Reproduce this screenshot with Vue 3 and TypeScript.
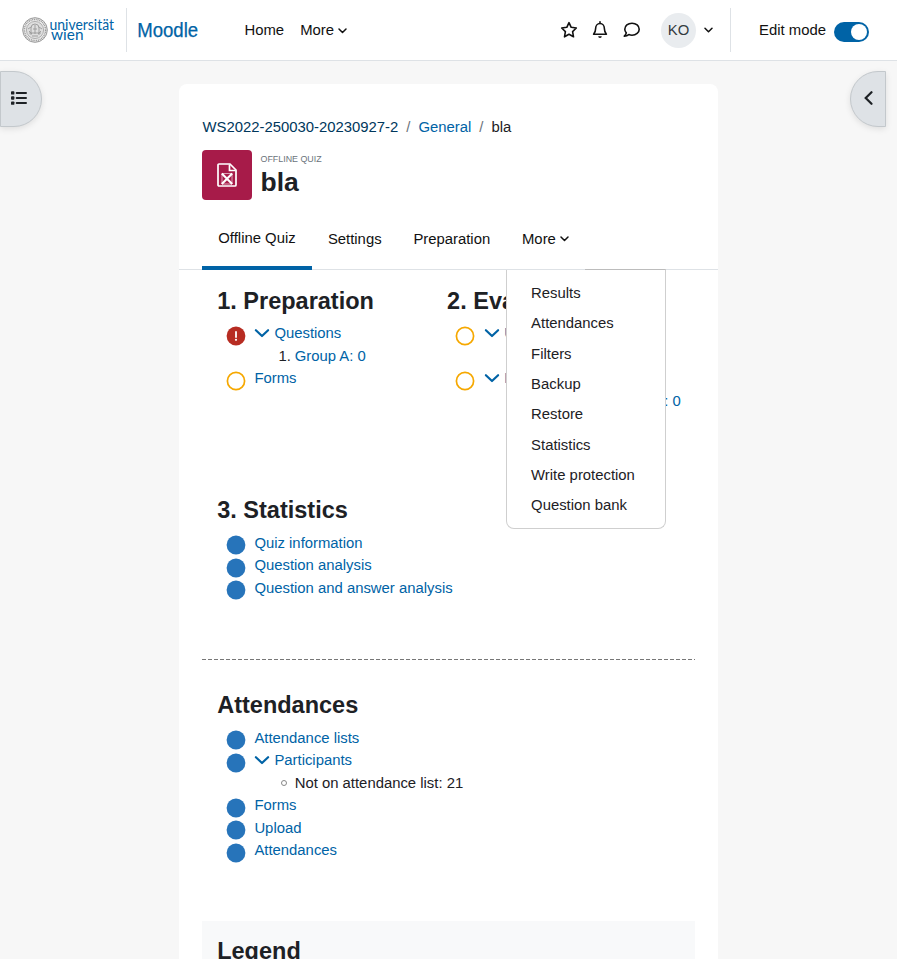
<script setup lang="ts">
interface Row {
  label: string
  status: 'error' | 'open' | 'done'
  expandable?: boolean
  children?: { marker: 'number' | 'circle'; text: string; link: boolean }[]
}
interface Section {
  title: string
  key: string
  rows: Row[]
}

const sections: Section[] = [
  {
    title: '1. Preparation',
    key: 'preparation',
    rows: [
      { label: 'Questions', status: 'error', expandable: true, children: [{ marker: 'number', text: 'Group A: 0', link: true }] },
      { label: 'Forms', status: 'open' },
    ],
  },
  {
    title: '2. Evaluation',
    key: 'evaluation',
    rows: [
      { label: 'Upload', status: 'open', expandable: true, children: [{ marker: 'circle', text: 'Forms', link: true }] },
      { label: 'Results', status: 'open', expandable: true, children: [{ marker: 'circle', text: 'Overall results listed: 0', link: true }] },
    ],
  },
  {
    title: '3. Statistics',
    key: 'statistics',
    rows: [
      { label: 'Quiz information', status: 'done' },
      { label: 'Question analysis', status: 'done' },
      { label: 'Question and answer analysis', status: 'done' },
    ],
  },
  {
    title: 'Attendances',
    key: 'attendances',
    rows: [
      { label: 'Attendance lists', status: 'done' },
      { label: 'Participants', status: 'done', expandable: true, children: [{ marker: 'circle', text: 'Not on attendance list: 21', link: false }] },
      { label: 'Forms', status: 'done' },
      { label: 'Upload', status: 'done' },
      { label: 'Attendances', status: 'done' },
    ],
  },
]

const menuItems = ['Results', 'Attendances', 'Filters', 'Backup', 'Restore', 'Statistics', 'Write protection', 'Question bank']
</script>

<template>
  <div class="page">
    <header class="navbar">
      <svg class="logo" width="186" height="50" viewBox="16 5 186 50">
        <g fill="none" stroke="#999">
          <circle cx="35" cy="30" r="12.3" fill="#ececec" stroke-width="1" />
          <circle cx="35" cy="30" r="10.6" stroke-width="1.5" stroke-dasharray="1 .8" />
          <circle cx="35" cy="30" r="8.6" stroke-width=".7" fill="#dedede" />
          <path d="M31 35v-7q0-4 4-4t4 4v7M28 29l3-2M42 29l-3-2M29 33h12M33 29h4M32 36h6M35 25v9M29 31l3 3M41 31l-3 3" stroke-width=".9" />
        </g>
        <g class="logo-uni" fill="#0063a6">
          <text x="49.5" y="29.800" textLength="64.5" lengthAdjust="spacingAndGlyphs">universität</text>
          <text class="wien" x="51" y="39.900" textLength="32.5" lengthAdjust="spacingAndGlyphs">wien</text>
        </g>
        <path d="M126.5 8v44" stroke="#dee2e6" />
        <text class="logo-moodle" x="137.2" y="37.2" textLength="61" lengthAdjust="spacingAndGlyphs" fill="#0063a6" stroke="#0063a6" stroke-width=".25">Moodle</text>
      </svg>
      <nav class="primary">
        <a>Home</a>
        <a>More <svg class="caret" width="9" height="6" viewBox="0 0 9 6"><path d="M1 1l3.5 3.5L8 1" /></svg></a>
      </nav>
      <div class="tools">
        <svg class="icon" width="18" height="18" viewBox="0 0 18 18"><path d="M9 1.6l2.2 4.7 5.1.7-3.7 3.6.9 5.2L9 13.3l-4.500 2.500.900-5.200L1.700 7l5.100-.700z" /></svg>
        <svg class="icon bell" width="16" height="18" viewBox="0 0 16 18"><path d="M8 .8v1.600M1.600 13.200h12.800c-1.300-1.500-2-3-2-5.500C12.400 4.600 10.500 2.500 8 2.500S3.600 4.600 3.600 7.700c0 2.500-.7 4-2 5.500z" /><path d="M6.200 15.300h3.600A1.800 1.800 0 0 1 6.200 15.300z" fill="#111" stroke="none" /></svg>
        <svg class="icon" width="18" height="18" viewBox="0 0 18 18"><path d="M9 2.200c-4.100 0-7.200 2.700-7.200 6 0 1.500.6 2.700 1.500 3.700-.3 1.300-1.100 2.400-2 3.200 1.800 0 3.400-.6 4.500-1.500 1 .4 2.100.6 3.200.6 4.100 0 7.200-2.700 7.200-6s-3.100-6-7.200-6z" /></svg>
        <span class="avatar">KO</span>
        <svg class="caret" width="9" height="6" viewBox="0 0 9 6"><path d="M1 1.300l3.500 3.500L8 1.300" /></svg>
      </div>
      <div class="editmode">
        <span>Edit mode</span>
        <span class="switch"><i></i></span>
      </div>
    </header>

    <main class="content">
      <button class="drawer left" aria-label="Open course index">
        <svg width="16" height="14" viewBox="0 0 16 14">
          <g fill="#1d2125"><rect width="3.400" height="3.400" y=".2" rx=".9" /><rect width="3.400" height="3.400" y="5.300" rx=".9" /><rect width="3.400" height="3.400" y="10.400" rx=".9" /></g>
          <path d="M5.700 1.900h9.300M5.700 7h9.300M5.700 12.100h9.300" stroke="#1d2125" stroke-width="2" stroke-linecap="round" />
        </svg>
      </button>
      <button class="drawer right" aria-label="Open block drawer">
        <svg width="9" height="14" viewBox="0 0 9 14"><path d="M7.500 1.200L1.700 7l5.800 5.800" fill="none" stroke="#1d2125" stroke-width="2.200" stroke-linecap="round" /></svg>
      </button>

      <article class="card">
        <div class="breadcrumb">
          <a class="course">WS2022-250030-20230927-2</a><i>/</i><a>General</a><i>/</i><span>bla</span>
        </div>
        <div class="heading">
          <span class="activity-icon">
            <svg width="20" height="24" viewBox="0 0 20 24" fill="none" stroke="#fff">
              <path d="M1 2q0-1 1-1h11l6 6v15q0 1-1 1H2q-1 0-1-1z" stroke-width="1.700" />
              <path d="M12.500 1.500v6h6" stroke-width="1.700" />
              <path d="M5 10.500h10v10.500H5z" stroke-width=".8" opacity=".75" />
              <path d="M4.800 10.500l10.400 10.500M15.200 10.500L4.800 21" stroke-width="2.100" />
            </svg>
          </span>
          <div class="titles">
            <div class="kind">Offline Quiz</div>
            <h1>bla</h1>
          </div>
        </div>

        <nav class="tabs">
          <a class="active">Offline Quiz</a>
          <a>Settings</a>
          <a>Preparation</a>
          <div class="more">
            <a>More <svg class="caret" width="9" height="6" viewBox="0 0 9 6"><path d="M1 1l3.500 3.500L8 1" /></svg></a>
            <div class="menu">
              <a v-for="item in menuItems" :key="item">{{ item }}</a>
            </div>
          </div>
        </nav>

        <div class="sections">
          <section v-for="s in sections" :key="s.key" :class="s.key">
            <h2>{{ s.title }}</h2>
            <div v-for="row in s.rows" :key="row.label" class="row">
              <svg class="status" width="20" height="20" viewBox="0 0 20 20">
                <circle v-if="row.status === 'open'" cx="10" cy="10" r="8.600" fill="#fff" stroke="#f6a800" stroke-width="1.700" />
                <circle v-else cx="10" cy="10" r="9.400" :fill="row.status === 'error' ? '#b72c22' : '#2774ba'" />
                <path v-if="row.status === 'error'" d="M10 6v5" stroke="#fff" stroke-width="1.800" stroke-linecap="round" />
                <circle v-if="row.status === 'error'" cx="10" cy="13.800" r="1.100" fill="#fff" />
              </svg>
              <div>
                <a class="label">
                  <svg v-if="row.expandable" class="chevron" width="16" height="10" viewBox="0 0 16 10"><path d="M1.900 2.200L8 8l6.100-5.800" /></svg>{{ row.label }}
                </a>
                <div v-for="c in row.children" :key="c.text" class="child">
                  <span v-if="c.marker === 'number'" class="number">1.</span>
                  <span v-else class="ring"></span>
                  <a v-if="c.link">{{ c.text }}</a>
                  <span v-else>{{ c.text }}</span>
                </div>
              </div>
            </div>
          </section>
        </div>
        <section class="legend"><h2>Legend</h2></section>
      </article>
    </main>
  </div>
</template>

<style>
body { background: #f7f7f7; }
</style>
<style scoped>
.page { height: 959px; overflow: hidden; display: flex; flex-direction: column; background: #f7f7f7; color: #1d2125; font: 14.860px/22.500px "Liberation Sans", Arial, sans-serif; }
.page *, .page { box-sizing: border-box; }
h1, h2 { margin: 0; }
a { color: #0063a6; text-decoration: none; }
.navbar { flex: none; height: 61px; background: #fff; border-bottom: 1px solid #dee2e6; display: flex; align-items: center; padding: 0 28px 0 16px; color: #111; }
.logo { display: block; flex: none; }
.logo-uni { font: 15px Lato, sans-serif; }
.logo-uni .wien { font-size: 16px; }
.logo-moodle { font: 19.500px "Liberation Sans", sans-serif; }
.primary { display: flex; gap: 16px; margin-left: 42.500px; white-space: nowrap; }
.primary a { color: #111; }
.caret { fill: none; stroke: #111; stroke-width: 1.500; stroke-linecap: round; stroke-linejoin: round; vertical-align: .500px; }
.tools { display: flex; align-items: center; margin-left: auto; height: 44px; padding-right: 17px; border-right: 1px solid #dee2e6; }
.icon { fill: none; stroke: #111; stroke-width: 1.600; stroke-linejoin: round; stroke-linecap: round; margin-right: 14px; }
.bell { margin-right: 15px; }
.avatar { width: 35px; height: 35px; margin: 0 8px 0 6px; border-radius: 50%; background: #e9ecef; color: #343a40; display: grid; place-items: center; }
.editmode { display: flex; align-items: center; gap: 8px; margin-left: 28px; white-space: nowrap; }
.switch { display: flex; justify-content: flex-end; width: 35px; height: 20px; padding: 2px; margin-top: 3px; border-radius: 10px; background: #0063a6; }
.switch i { width: 16px; height: 16px; border-radius: 50%; background: #fff; }
.content { position: relative; flex: 1; padding: 23px 179px 0; }
.drawer { position: absolute; top: 10px; height: 56px; display: flex; align-items: center; padding: 0 0 2px; background: #dee2e6; border: 1px solid #c3c8cc; box-shadow: 0 2px 6px rgba(0, 0, 0, .1); }
.left { left: 0; width: 42px; border-radius: 0 28px 28px 0; padding-left: 10px; }
.right { right: 11px; width: 36px; border-radius: 28px 0 0 28px; padding-left: 13px; }
.card { height: 900px; background: #fff; border-radius: 8px; padding: 32px 23px 0; }
.breadcrumb { display: flex; padding-left: .5px; }
.breadcrumb i { font-style: normal; color: #6a737b; margin: 0 8px; }
.breadcrumb .course { color: #00375c; }
.heading { display: flex; gap: 8.500px; margin-top: 11.500px; height: 50px; }
.activity-icon { width: 50px; height: 50px; border-radius: 4px; background: #a71b49; display: grid; place-items: center; }
.kind { font-size: 8.900px; line-height: 13px; text-transform: uppercase; color: #6a737b; margin-top: 3px; }
h1 { font-size: 26.450px; line-height: 32px; }
.tabs { display: flex; height: 70px; margin: 0 -23px; padding: 8px 23px 0; border-bottom: 1px solid #dee2e6; }
.tabs a { color: #111; white-space: nowrap; }
.tabs > a, .more > a { display: flex; align-items: center; padding: 0 15.900px; height: 62px; gap: 4px; }
.tabs > .active { border-bottom: 4px solid #0063a6; width: 110px; padding: 2px 0 0 16.300px; }
.more { position: relative; }
.menu { position: absolute; z-index: 2; top: 61px; left: 0; width: 160px; height: 260px; padding: 8px 0; background: #fff; border: 1px solid #cfcfcf; border-top-color: #bcbcbc; border-radius: 0 0 8px 8px; }
.menu::before { content: ""; position: absolute; top: -1px; left: -1px; width: 79px; height: 1px; background: #dee2e6; }
.menu a { display: block; padding: 4px 24px; height: 30.330px; }
.tabs .menu a { color: #1d2125; }
.sections { display: grid; grid-template-columns: 229.900px 1fr; grid-template-rows: 209px 180px 262px; }
.sections section { padding: 17px 0 0 15.200px; }
.statistics, .attendances { grid-column: 1 / 3; }
.sections .attendances { padding-top: 32px; background: repeating-linear-gradient(90deg, #777 0 4px, transparent 4px 6px) 0 0 / 100% 1px no-repeat; }
h2 { font-size: 23.500px; line-height: 28px; margin-bottom: 7.200px; white-space: nowrap; }
.statistics h2, .attendances h2 { margin-bottom: 7.600px; }
.row { display: flex; gap: 9px; padding-left: 8.400px; white-space: nowrap; }
.row .status { margin: 3.800px -.200px -3px 0; height: 20px; flex: none; }
.label { display: flex; align-items: center; height: 22.500px; }
.chevron { fill: none; stroke: #0063a6; stroke-width: 2.200; stroke-linecap: round; stroke-linejoin: round; margin-right: 4px; }
.child { display: flex; height: 22.500px; padding-left: 24px; }
.evaluation .child { padding-left: 30px; }
.number { width: 16.300px; }
.ring { width: 6px; height: 6px; margin: 8px 7.300px 0 3px; border: 1px solid #888; border-radius: 50%; }
.legend { height: 60px; padding: 16px 15.200px; background: #f8f9fa; }
</style>
